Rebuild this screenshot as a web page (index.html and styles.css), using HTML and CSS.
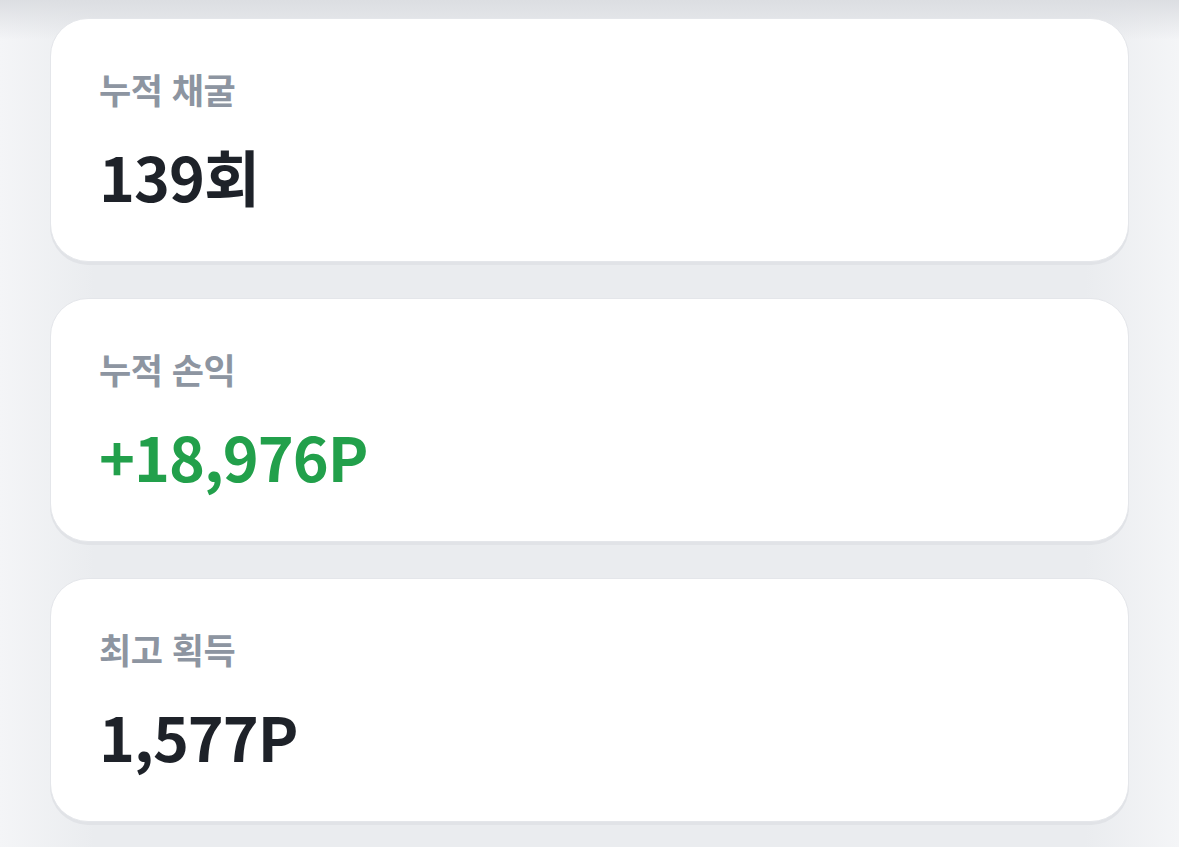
FILE: index.html
```html
<!DOCTYPE html>
<html lang="ko">
<head>
  <meta charset="UTF-8">
  <title>채굴 통계</title>
  <link rel="stylesheet" href="styles.css">
</head>
<body>

  <div class="stats">
    <div class="stat-card">
      <div class="stat-label">누적 채굴</div>
      <div class="stat-value">139회</div>
    </div>
    <div class="stat-card">
      <div class="stat-label">누적 손익</div>
      <div class="stat-value plus">+18,976P</div>
    </div>
    <div class="stat-card">
      <div class="stat-label">최고 획득</div>
      <div class="stat-value">1,577P</div>
    </div>
  </div>

</body>
</html>
```

FILE: styles.css
```css
html, body {
  height: 100%;
}
body {
  margin: 0;
  font-family: "Noto Sans CJK KR", "Noto Sans", sans-serif;
  background:
    linear-gradient(to bottom, #dcdee2 0, rgba(234, 236, 239, 0) 40px),
    linear-gradient(to right, #f4f5f7 0, #eaecef 8%, #eaecef 92%, #f4f5f7 100%);
}
.stats {
  display: flex;
  flex-direction: column;
  gap: 36px;
  padding: 18px 50px 0 50px;
}
.stat-card {
  height: 244px;
  box-sizing: border-box;
  background: #fff;
  border: 1px solid #e4e6ea;
  border-radius: 38px;
  box-shadow: 0 3px 0 #e1e3e7;
  padding: 52px 48px 0 48px;
}
.stat-label {
  font-size: 35px;
  font-weight: 700;
  color: #8d95a1;
  line-height: 36px;
  letter-spacing: -0.5px;
}
.stat-value {
  margin-top: 39px;
  font-size: 61px;
  font-weight: 700;
  color: #1e2229;
  line-height: 60px;
  letter-spacing: -1px;
}
.stat-value.plus {
  color: #22a04b;
}
```
